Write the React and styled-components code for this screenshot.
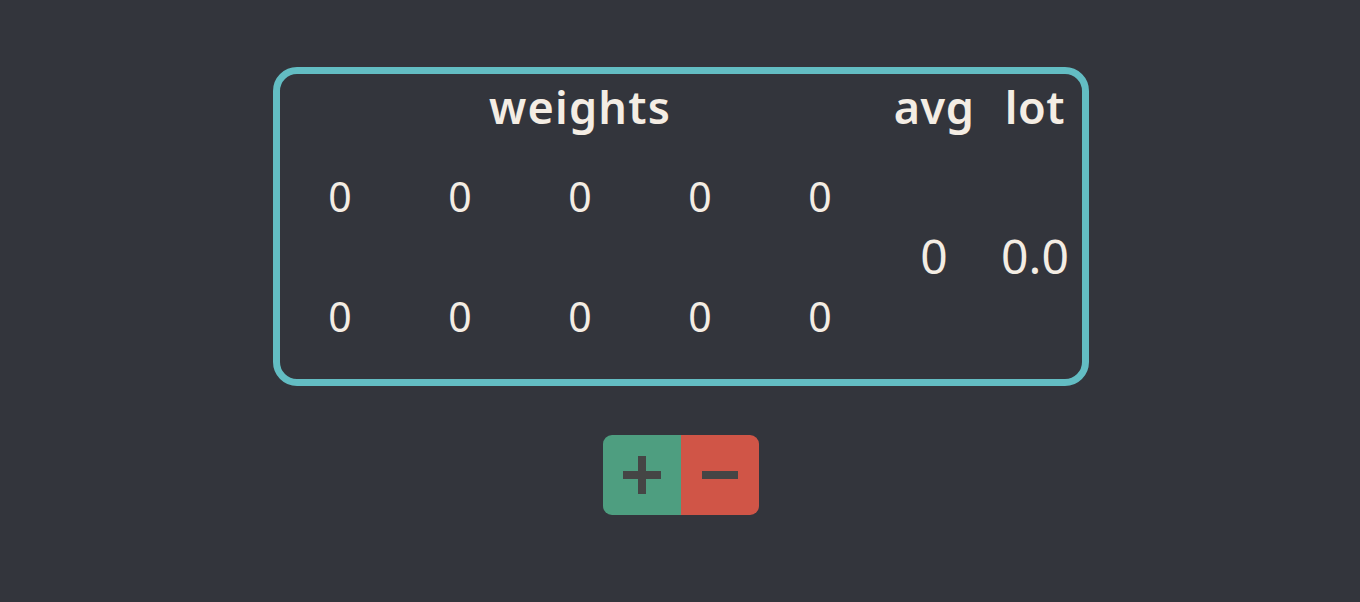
import React from "react";
import styled, { createGlobalStyle } from "styled-components";

const GlobalStyle = createGlobalStyle`
  html, body {
    margin: 0;
    padding: 0;
    background: #33353c;
  }
  body {
    font-family: "Noto Sans", "Open Sans", sans-serif;
    color: #f4ede4;
  }
`;

const Page = styled.div`
  min-height: 602px;
  display: flex;
  flex-direction: column;
  align-items: center;
  padding-top: 67px;
  box-sizing: border-box;
  padding-left: 2px;
`;

const Board = styled.div`
  width: 816px;
  height: 319px;
  box-sizing: border-box;
  border: 7px solid #63bdc3;
  border-radius: 24px;
  display: grid;
  grid-template-columns: repeat(5, 120px) 108px 94px;
  grid-template-rows: 64px 120px 120px;
`;

const Head = styled.div`
  grid-column: ${({ $span }) => ($span ? `span ${$span}` : "auto")};
  display: flex;
  align-items: center;
  justify-content: center;
  font-size: 45px;
  font-weight: 600;
  letter-spacing: ${({ $spacing }) => $spacing || 0.5}px;
`;

const Cell = styled.div`
  display: flex;
  align-items: center;
  justify-content: center;
  font-size: 41px;
  padding-bottom: 4px;
`;

const Stat = styled.div`
  grid-row: span 2;
  display: flex;
  align-items: center;
  justify-content: center;
  font-size: 48px;
  padding-bottom: 5px;
`;

const Controls = styled.div`
  display: flex;
  margin-top: 49px;
  border-radius: 9px;
  overflow: hidden;
`;

const Btn = styled.button`
  width: 78px;
  height: 80px;
  border: none;
  padding: 0;
  margin: 0;
  background: ${({ $tone }) => $tone};
  display: flex;
  align-items: center;
  justify-content: center;
  cursor: pointer;
`;

const PlusIcon = () => (
  <svg width="38" height="38" viewBox="0 0 38 38">
    <rect x="0" y="15" width="38" height="8" fill="#454545" />
    <rect x="15" y="0" width="8" height="38" fill="#454545" />
  </svg>
);

const MinusIcon = () => (
  <svg width="38" height="38" viewBox="0 0 38 38">
    <rect x="1" y="15" width="36" height="8" fill="#454545" />
  </svg>
);

const rows = [
  [0, 0, 0, 0, 0],
  [0, 0, 0, 0, 0],
];

export default function App() {
  return (
    <>
      <GlobalStyle />
      <Page>
        <Board>
          <Head $span={5} $spacing={1.2}>weights</Head>
          <Head>avg</Head>
          <Head>lot</Head>
          {rows[0].map((w, i) => (
            <Cell key={`a${i}`}>{w}</Cell>
          ))}
          <Stat>0</Stat>
          <Stat>0.0</Stat>
          {rows[1].map((w, i) => (
            <Cell key={`b${i}`}>{w}</Cell>
          ))}
        </Board>
        <Controls>
          <Btn $tone="#4e9e80">
            <PlusIcon />
          </Btn>
          <Btn $tone="#d05547">
            <MinusIcon />
          </Btn>
        </Controls>
      </Page>
    </>
  );
}
